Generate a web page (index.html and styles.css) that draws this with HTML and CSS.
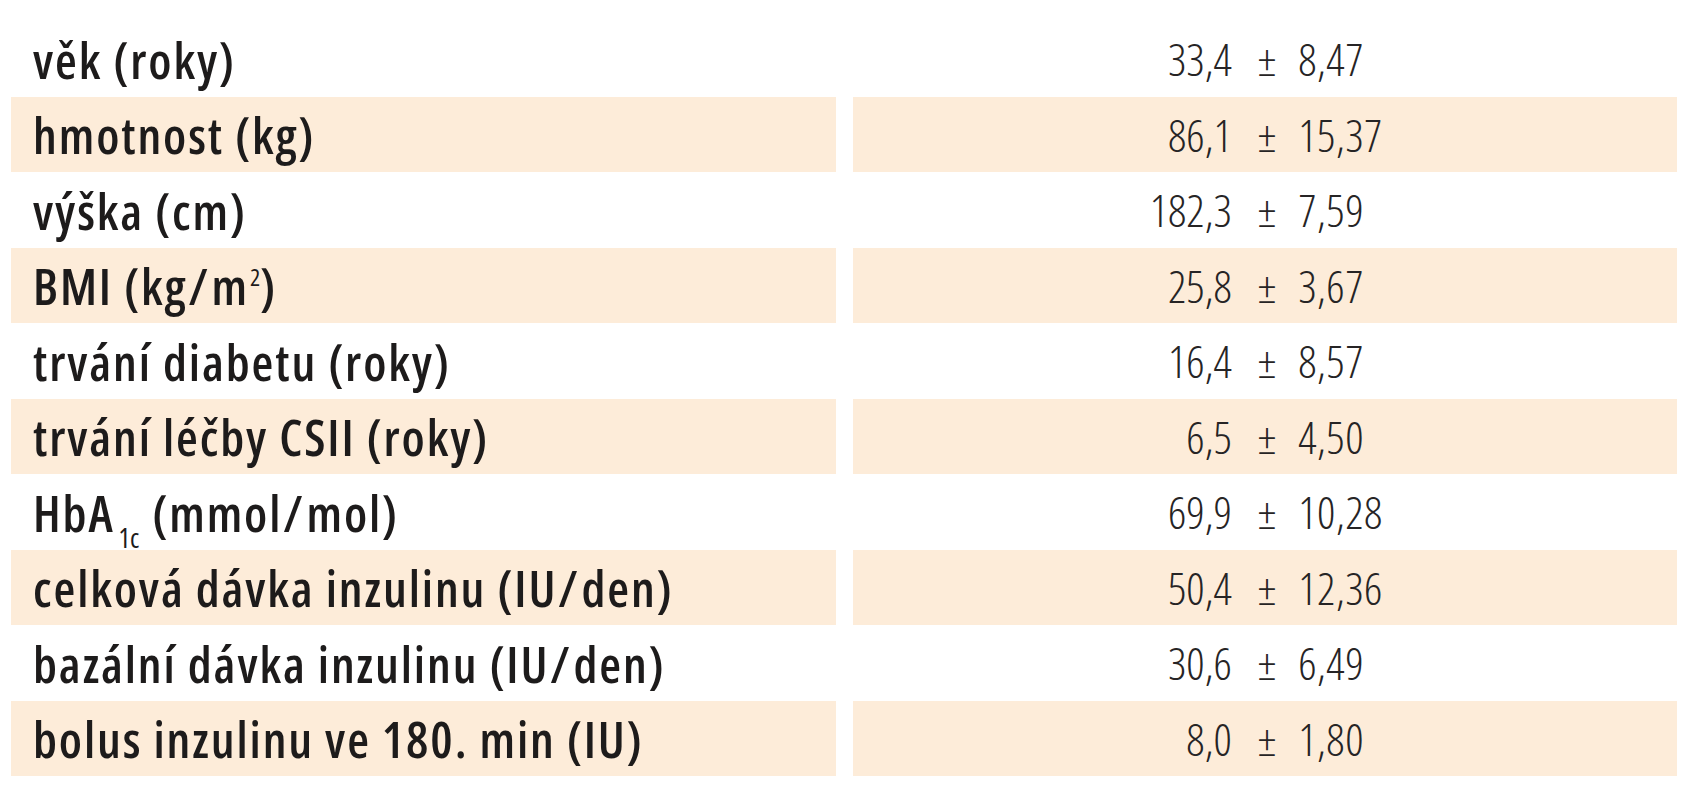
FILE: index.html
```html
<!DOCTYPE html>
<html lang="cs">
<head>
<meta charset="utf-8">
<title>Charakteristika souboru</title>
<link rel="stylesheet" href="styles.css">
</head>
<body>
<div class="table">
  <div class="row">
    <div class="cell label"><span class="txt">věk (roky)</span></div>
    <div class="cell value"><span class="l">33,4</span><span class="pm">±</span><span class="r">8,47</span></div>
  </div>
  <div class="row alt">
    <div class="cell label"><span class="txt">hmotnost (kg)</span></div>
    <div class="cell value"><span class="l">86,1</span><span class="pm">±</span><span class="r">15,37</span></div>
  </div>
  <div class="row">
    <div class="cell label"><span class="txt">výška (cm)</span></div>
    <div class="cell value"><span class="l">182,3</span><span class="pm">±</span><span class="r">7,59</span></div>
  </div>
  <div class="row alt">
    <div class="cell label"><span class="txt">BMI (kg<span class="sl">/</span>m<sup>2</sup>)</span></div>
    <div class="cell value"><span class="l">25,8</span><span class="pm">±</span><span class="r">3,67</span></div>
  </div>
  <div class="row">
    <div class="cell label"><span class="txt">trvání diabetu (roky)</span></div>
    <div class="cell value"><span class="l">16,4</span><span class="pm">±</span><span class="r">8,57</span></div>
  </div>
  <div class="row alt">
    <div class="cell label"><span class="txt">trvání léčby CSII (roky)</span></div>
    <div class="cell value"><span class="l">6,5</span><span class="pm">±</span><span class="r">4,50</span></div>
  </div>
  <div class="row">
    <div class="cell label"><span class="txt">HbA<sub>1c</sub> (mmol<span class="sl">/</span>mol)</span></div>
    <div class="cell value"><span class="l">69,9</span><span class="pm">±</span><span class="r">10,28</span></div>
  </div>
  <div class="row alt">
    <div class="cell label"><span class="txt">celková dávka inzulinu (IU<span class="sl">/</span>den)</span></div>
    <div class="cell value"><span class="l">50,4</span><span class="pm">±</span><span class="r">12,36</span></div>
  </div>
  <div class="row">
    <div class="cell label"><span class="txt">bazální dávka inzulinu (IU<span class="sl">/</span>den)</span></div>
    <div class="cell value"><span class="l">30,6</span><span class="pm">±</span><span class="r">6,49</span></div>
  </div>
  <div class="row alt">
    <div class="cell label"><span class="txt">bolus inzulinu ve 180. min (IU)</span></div>
    <div class="cell value"><span class="l">8,0</span><span class="pm">±</span><span class="r">1,80</span></div>
  </div>
</div>
</body>
</html>
```
FILE: styles.css
```css
html, body {
  margin: 0;
  padding: 0;
  background: #ffffff;
}

body {
  padding: 21px 0 0 11px;
  font-family: "Open Sans", "Noto Sans", sans-serif;
}

.table {
  display: grid;
  grid-template-columns: 825px 824px;
  column-gap: 17px;
}

.row {
  display: contents;
}

.cell {
  height: 75.5px;
  display: flex;
  align-items: center;
  box-sizing: border-box;
  white-space: nowrap;
}

.row.alt .cell {
  background: #fdecd9;
}

.label {
  padding-left: 22px;
  padding-top: 2px;
  font-size: 50px;
  font-weight: 600;
  font-stretch: 75%;
  letter-spacing: 1.9px;
  color: #1d1b1b;
}

.label .sl {
  margin: 0 2px 0 1px;
}

.label sup {
  font-size: 0.48em;
  font-weight: 400;
  letter-spacing: 0;
  vertical-align: 0.8em;
  line-height: 0;
  margin-left: 1px;
}

.label sub {
  font-size: 0.54em;
  font-weight: 400;
  letter-spacing: 0;
  vertical-align: -0.6em;
  line-height: 0;
  margin-left: 4px;
  margin-right: 2px;
}

.value {
  display: grid;
  grid-template-columns: 1fr auto 1fr;
  align-items: center;
  padding-left: 0;
  font-size: 45px;
  font-weight: 300;
  font-stretch: 75%;
  color: #262425;
}

.value .l {
  text-align: right;
}

.value .pm {
  padding: 0 22px 0 26px;
}

.value .r {
  text-align: left;
  letter-spacing: 0.5px;
}
```
